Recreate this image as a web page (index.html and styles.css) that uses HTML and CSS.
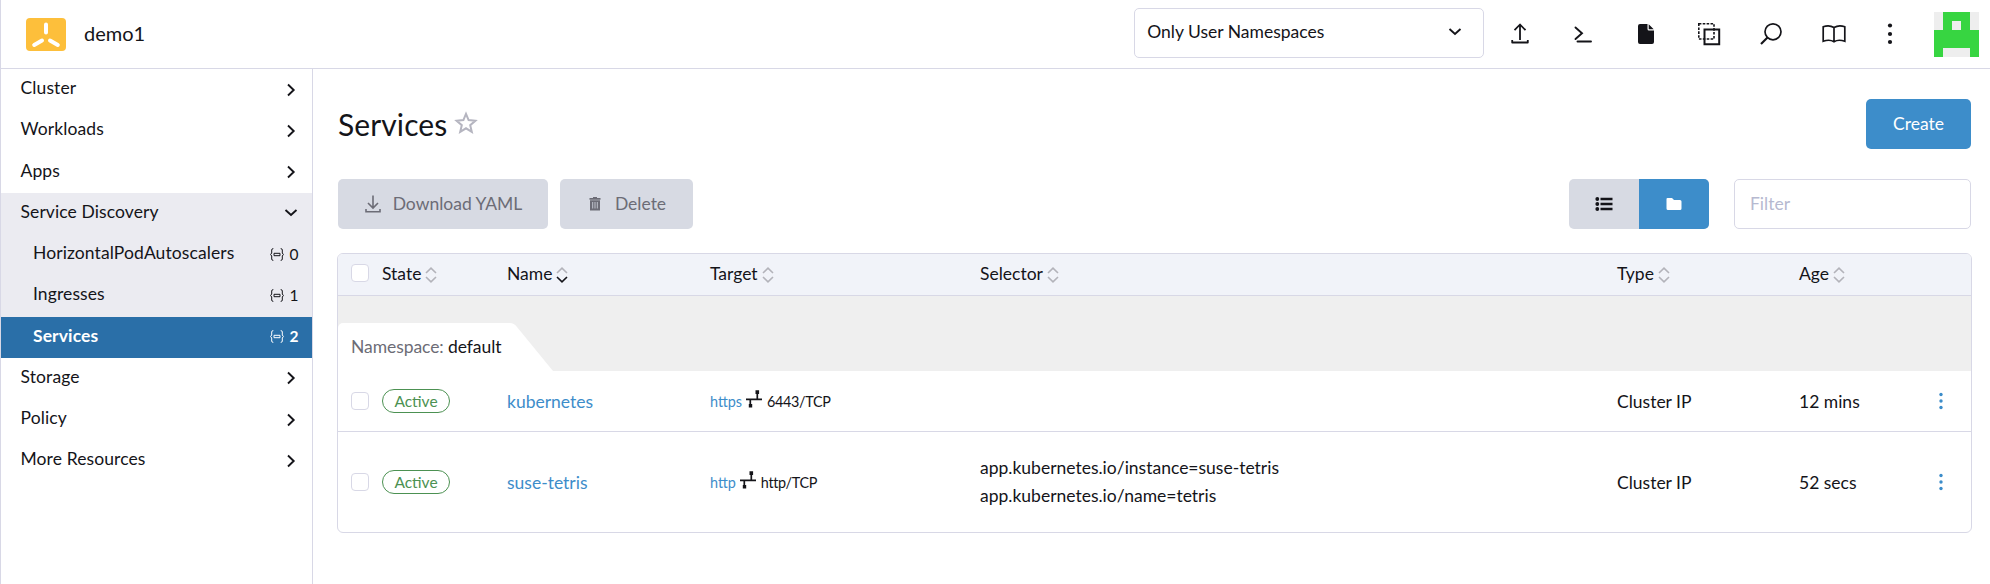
FILE: index.html
```html
<!DOCTYPE html>
<html lang="en">
<head>
<meta charset="utf-8">
<title>Services</title>
<link rel="stylesheet" href="styles.css">
</head>
<body>
<svg class="defs" width="0" height="0">
  <symbol id="chev-right" viewBox="0 0 12 14"><path d="M3 1.500 8.700 7 3 12.500" fill="none" stroke="currentColor" stroke-width="1.900"/></symbol>
  <symbol id="chev-down" viewBox="0 0 14 10"><path d="M1.500 2 7 7 12.500 2" fill="none" stroke="currentColor" stroke-width="1.900"/></symbol>
  <symbol id="ns" viewBox="0 0 14 13"><path d="M3.300 .6Q1.700 .6 1.700 2V5L.6 6.500 1.700 8V11Q1.700 12.400 3.300 12.400M10.700 .6Q12.300 .6 12.300 2V5L13.400 6.500 12.300 8V11Q12.300 12.400 10.700 12.400M4 5.300H10V7.700H4Z" fill="none" stroke="currentColor" stroke-width="1"/></symbol>
  <symbol id="sort-up" viewBox="0 0 12 7"><path d="M1 6 6 1.200 11 6" fill="none" stroke="currentColor" stroke-width="1.600"/></symbol>
  <symbol id="sort-down" viewBox="0 0 12 7"><path d="M1 1 6 5.800 11 1" fill="none" stroke="currentColor" stroke-width="1.600"/></symbol>
  <symbol id="dots" viewBox="0 0 6 18"><g fill="currentColor"><circle cx="3" cy="2.500" r="1.700"/><circle cx="3" cy="9" r="1.700"/><circle cx="3" cy="15.500" r="1.700"/></g></symbol>
  <symbol id="port" viewBox="0 0 16 18"><path d="M0 9.300H16M4.300 9V15M11.300 3V9" fill="none" stroke="currentColor" stroke-width="1.700"/><path d="M2.800 14h3.400v3.600H2.800zM9.500 .3h3.600v3.600H9.500z" fill="currentColor"/></symbol>
</svg>
<div class="app">
  <header class="header">
    <svg class="logo" width="40" height="33" viewBox="0 0 40 33"><rect width="40" height="33" rx="4" fill="#fdbf3b"/><path d="M20 6.500V14.500M16 22.500 8.200 27M24 22.500 31.800 27" stroke="#fff" stroke-width="4" stroke-linecap="round"/></svg>
    <div class="cluster">demo1</div>
    <div class="select"><span>Only User Namespaces</span><svg width="14" height="10"><use href="#chev-down"/></svg></div>
    <nav class="tools">
      <svg width="24" height="24" viewBox="0 0 24 24"><path d="M12 18V3M6.500 8.200 12 2.500 17.500 8.200M4.200 18V20.500H19.800V18" fill="none" stroke="currentColor" stroke-width="1.800" stroke-linejoin="round"/></svg>
      <svg width="24" height="24" viewBox="0 0 24 24"><path d="M4.500 5.500 11 11.200 4.500 17M6.500 19.500H20" fill="none" stroke="currentColor" stroke-width="1.900" stroke-linecap="round"/></svg>
      <svg width="24" height="24" viewBox="0 0 24 24"><path d="M6 2H13.500V7Q13.500 8.500 15 8.500H20V20Q20 22 18 22H6Q4 22 4 20V4Q4 2 6 2ZM14.700 2.300 19.700 7.300H14.700Z" fill="currentColor"/></svg>
      <svg width="24" height="24" viewBox="0 0 24 24"><path d="M1.800 1.800H17V17H1.800Z" fill="none" stroke="currentColor" stroke-width="1.600" stroke-dasharray="2.600 1.300"/><path d="M7.500 7.500H22.200V22.200H7.500Z" fill="none" stroke="currentColor" stroke-width="2"/></svg>
      <svg width="24" height="24" viewBox="0 0 24 24"><circle cx="14" cy="9.800" r="8" fill="none" stroke="currentColor" stroke-width="1.700"/><path d="M8.500 15.500 2 22" stroke="currentColor" stroke-width="2.200"/></svg>
      <svg width="24" height="24" viewBox="0 0 24 24"><path d="M12 5.500Q7 2.500 1.200 4.800V19.300Q7.500 17 12 19.700 16.500 17 22.800 19.300V4.800Q17 2.500 12 5.500ZM12 5.500V19.700" fill="none" stroke="currentColor" stroke-width="1.700"/></svg>
      <svg class="more" width="24" height="24" viewBox="0 0 24 24"><g fill="currentColor"><circle cx="12" cy="3.500" r="2.100"/><circle cx="12" cy="12" r="2.100"/><circle cx="12" cy="20" r="2.100"/></g></svg>
    </nav>
    <svg class="avatar" width="45" height="45" viewBox="0 0 5 5" shape-rendering="crispEdges"><path fill="#eee" d="M0 0h5v5H0z"/><path fill="#37d541" d="M1 0h3v2h1v3H4V4H1v1H0V2h1z"/><path fill="#eee" d="M2 1h1v1H2z"/></svg>
  </header>
  <div class="body">
    <nav class="side">
      <div class="item"><span>Cluster</span><svg class="cr" width="12" height="14"><use href="#chev-right"/></svg></div>
      <div class="item"><span>Workloads</span><svg class="cr" width="12" height="14"><use href="#chev-right"/></svg></div>
      <div class="item"><span>Apps</span><svg class="cr" width="12" height="14"><use href="#chev-right"/></svg></div>
      <div class="open">
        <div class="item"><span>Service Discovery</span><svg class="cd" width="14" height="10"><use href="#chev-down"/></svg></div>
        <div class="item sub"><span>HorizontalPodAutoscalers</span><span class="count"><svg width="14" height="13"><use href="#ns"/></svg>0</span></div>
        <div class="item sub"><span>Ingresses</span><span class="count"><svg width="14" height="13"><use href="#ns"/></svg>1</span></div>
        <div class="item sub active"><span>Services</span><span class="count"><svg width="14" height="13"><use href="#ns"/></svg>2</span></div>
      </div>
      <div class="item"><span>Storage</span><svg class="cr" width="12" height="14"><use href="#chev-right"/></svg></div>
      <div class="item"><span>Policy</span><svg class="cr" width="12" height="14"><use href="#chev-right"/></svg></div>
      <div class="item"><span>More Resources</span><svg class="cr" width="12" height="14"><use href="#chev-right"/></svg></div>
    </nav>
    <main class="main">
      <div class="title">
        <h1>Services</h1>
        <svg class="star" width="24" height="24" viewBox="0 0 24 24"><path d="M12 2.800 14.600 9.100 21.400 9.700 16.200 14.200 17.800 20.900 12 17.300 6.200 20.900 7.800 14.200 2.600 9.700 9.400 9.100Z" fill="none" stroke="#b5b5c0" stroke-width="2"/></svg>
        <button class="btn primary">Create</button>
      </div>
      <div class="actions">
        <button class="btn dl"><svg width="16" height="18" viewBox="0 0 16 18"><path d="M8 .5V13M3 8 8 13 13 8M1 14V16.700H15V14" fill="none" stroke="currentColor" stroke-width="1.600"/></svg>Download YAML</button>
        <button class="btn del"><svg width="12" height="14" viewBox="0 0 12 14"><path d="M4 0h4v1h3.500v1.700H.5V1H4zM1 3.200H11V13.500H1z" fill="currentColor"/><path d="M3.700 5v6.500M6 5v6.500M8.300 5v6.500" stroke="#d7dae3" stroke-width=".8"/></svg>Delete</button>
        <div class="toggle">
          <span><svg width="18" height="14" viewBox="0 0 18 14"><path d="M5.500 2H17.500M5.500 7H17.500M5.500 12H17.500" stroke="currentColor" stroke-width="2.500"/><g fill="currentColor"><circle cx="2.300" cy="2" r="1.900"/><circle cx="2.300" cy="7" r="1.900"/><circle cx="2.300" cy="12" r="1.900"/></g></svg></span>
          <span class="on"><svg width="16" height="14" viewBox="0 0 16 14"><path d="M1.500 1H6L8 3H14Q15.500 3 15.500 4.500V11.500Q15.500 13 14 13H2Q.5 13 .5 11.500V2Q.5 1 1.500 1Z" fill="currentColor"/></svg></span>
        </div>
        <input class="filter" placeholder="Filter">
      </div>
      <section class="table">
        <div class="row head">
          <i class="check"></i>
          <span class="th">State<span class="sort"><svg width="12" height="7"><use href="#sort-up"/></svg><svg width="12" height="7"><use href="#sort-down"/></svg></span></span>
          <span class="th">Name<span class="sort desc"><svg width="12" height="7"><use href="#sort-up"/></svg><svg width="12" height="7"><use href="#sort-down"/></svg></span></span>
          <span class="th">Target<span class="sort"><svg width="12" height="7"><use href="#sort-up"/></svg><svg width="12" height="7"><use href="#sort-down"/></svg></span></span>
          <span class="th">Selector<span class="sort"><svg width="12" height="7"><use href="#sort-up"/></svg><svg width="12" height="7"><use href="#sort-down"/></svg></span></span>
          <span class="th">Type<span class="sort"><svg width="12" height="7"><use href="#sort-up"/></svg><svg width="12" height="7"><use href="#sort-down"/></svg></span></span>
          <span class="th">Age<span class="sort"><svg width="12" height="7"><use href="#sort-up"/></svg><svg width="12" height="7"><use href="#sort-down"/></svg></span></span>
        </div>
        <div class="group">
          <div class="tab"><span>Namespace:</span> default</div>
          <svg class="slope" width="43" height="48" viewBox="0 0 43 48"><path d="M0 0Q4 0 7 4L43 48H0Z" fill="#fff"/></svg>
        </div>
        <div class="row r1">
          <i class="check"></i>
          <span class="badge">Active</span>
          <a>kubernetes</a>
          <span class="target"><a>https</a><svg width="16" height="18"><use href="#port"/></svg><span>6443/TCP</span></span>
          <span></span>
          <span>Cluster IP</span>
          <span>12 mins</span>
          <svg class="kebab" width="6" height="18"><use href="#dots"/></svg>
        </div>
        <div class="row r2">
          <i class="check"></i>
          <span class="badge">Active</span>
          <a>suse-tetris</a>
          <span class="target"><a>http</a><svg width="16" height="18"><use href="#port"/></svg><span>http/TCP</span></span>
          <span class="selector">app.kubernetes.io/instance=suse-tetris<br>app.kubernetes.io/name=tetris</span>
          <span>Cluster IP</span>
          <span>52 secs</span>
          <svg class="kebab" width="6" height="18"><use href="#dots"/></svg>
        </div>
      </section>
    </main>
  </div>
</div>
</body>
</html>
```
FILE: styles.css
```css
* { box-sizing: border-box; }
body { margin: 0; font: 17.5px/21px Lato, sans-serif; color: #141419; background: #fff; overflow: hidden; }
svg { display: block; flex: none; }
.defs { position: absolute; }
.app { height: 584px; border-left: 1px solid #d8d8e6; display: flex; flex-direction: column; }
.header { height: 69px; border-bottom: 1px solid #d8d8e6; display: flex; align-items: center; padding-right: 11px; flex: none; }
.logo { margin-left: 25px; }
.cluster { margin-left: 18px; font-size: 20px; padding-bottom: 2px; }
.select { margin-left: auto; width: 350px; height: 50px; margin-bottom: 2px; border: 1px solid #d8d8e6; border-radius: 5px; display: flex; align-items: center; justify-content: space-between; padding: 0 21px 3px 12px; }
.tools { display: flex; gap: 38.8px; margin-left: 24px; }
.tools .more { margin-left: -7px; }
.avatar { margin-left: 32px; }
.body { flex: 1; display: flex; min-height: 0; }
.side { width: 312px; border-right: 1px solid #d8d8e6; flex: none; letter-spacing: .1px; }
.item { height: 41.25px; padding: 0 15px 4px 19.5px; display: flex; align-items: center; justify-content: space-between; }
.cr { margin: 4px 0 0; }
.cd { margin: 4px -1px 0 0; }
.open { background: #ebebf1; }
.sub { padding-left: 32px; padding-right: 13.5px; }
.active { background: #2a6fa8; color: #fff; font-weight: 700; }
.count { display: flex; align-items: center; gap: 5px; font-size: 15.5px; padding-top: 3px; }
.main { flex: 1; padding: 30px 19px 0 24px; }
.title { display: flex; align-items: center; height: 50px; margin-left: 1px; }
h1 { margin: 0; font-size: 30px; font-weight: 400; line-height: 36px; letter-spacing: .1px; }
.star { margin: 0 0 2px 7px; }
.btn { height: 50px; border: 0; border-radius: 5px; background: #d7dae3; color: #6c6c76; font: inherit; display: flex; align-items: center; justify-content: center; padding: 0 0 1px; }
.primary { width: 105px; background: #3d8dca; color: #fff; margin-left: auto; }
.actions { display: flex; margin: 30px 0 24px 1px; }
.dl { width: 210px; gap: 12px; padding-left: 1px; }
.del { width: 133px; margin-left: 12px; gap: 14px; padding-left: 2px; }
.toggle { margin-left: auto; display: flex; border-radius: 5px; overflow: hidden; background: #d7dae3; }
.toggle span { width: 70px; height: 50px; display: flex; align-items: center; justify-content: center; padding-bottom: 1px; }
.toggle .on { background: #3d8dca; color: #fff; }
.filter { width: 237px; height: 50px; margin-left: 25px; border: 1px solid #d8d8e6; border-radius: 5px; padding: 0 15px 1px; font: inherit; }
.filter::placeholder { color: #b6b9d0; }
.table { border: 1px solid #d8d8e6; border-radius: 6px; overflow: hidden; margin-right: -1px; height: 280px; }
.row { display: grid; grid-template-columns: 31px 125px 203px 270px 637px 182px 139px 6px; padding-left: 13px; align-items: center; }
.head { height: 42px; background: #f1f3f9; border-bottom: 1px solid #d8d8e6; }
.th { display: flex; align-items: center; gap: 4px; padding-bottom: 2px; }
.sort { display: flex; flex-direction: column; gap: 2px; color: #b3b3ba; padding-top: 3px; }
.desc svg + svg { color: #141419; }
.check { width: 18px; height: 18px; border: 1px solid #d8d8e6; border-radius: 4px; background: #fff; }
.head .check { margin-bottom: 4px; }
.group { height: 75px; background: #efefef; display: flex; align-items: flex-end; }
.tab { width: 172px; height: 48px; background: #fff; border-radius: 5px 0 0 0; padding: 13px 0 0 13px; white-space: nowrap; letter-spacing: -.07px; }
.tab span { color: #6c6c76; }
.r1 { height: 61px; border-bottom: 1px solid #d8d8e6; }
.r2 { height: 100px; }
a { color: #3d8dca; }
.kebab { color: #3d8dca; }
.badge { justify-self: start; width: 68px; height: 24px; border: 1px solid #4c9152; border-radius: 12px; color: #4c9152; font-size: 15.5px; line-height: 23px; text-align: center; }
.target { display: flex; align-items: center; font-size: 14.4px; }
.target svg { margin: 0 5px 4px 4px; }
.target span { letter-spacing: -.35px; }
.selector { line-height: 28px; }
```
